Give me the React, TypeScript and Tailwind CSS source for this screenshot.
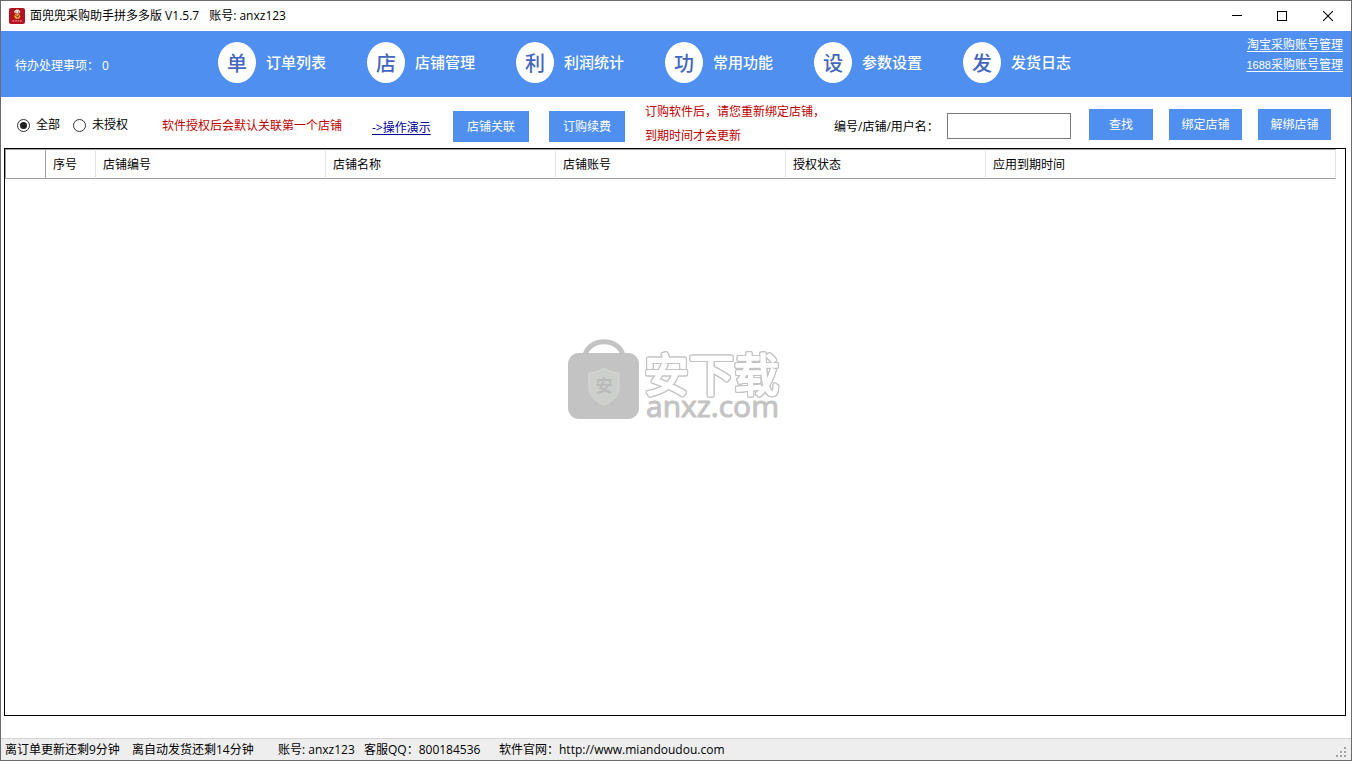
import { useState } from "react";

interface NavItem {
  mark: string;
  label: string;
}

const NAV_ITEMS: NavItem[] = [
  { mark: "单", label: "订单列表" },
  { mark: "店", label: "店铺管理" },
  { mark: "利", label: "利润统计" },
  { mark: "功", label: "常用功能" },
  { mark: "设", label: "参数设置" },
  { mark: "发", label: "发货日志" },
];

const COLUMNS = [
  { label: "序号", width: "w-[50px]" },
  { label: "店铺编号", width: "w-[230px]" },
  { label: "店铺名称", width: "w-[230px]" },
  { label: "店铺账号", width: "w-[230px]" },
  { label: "授权状态", width: "w-[200px]" },
  { label: "应用到期时间", width: "" },
];

const FILTERS = ["全部", "未授权"];

function AppIcon() {
  return (
    <svg width="16" height="16" viewBox="0 0 16 16" aria-hidden="true">
      <rect width="16" height="16" rx="2" fill="#b5121f" />
      <ellipse cx="8.2" cy="3.6" rx="3" ry="2" fill="#f4e6d8" />
      <path d="M5 2.4 6.6 1.4M11.2 2.6 9.8 1.4" stroke="#3a1512" strokeWidth="0.9" />
      <path d="M6.4 4h1M9 4h1" stroke="#3a1512" strokeWidth="0.9" />
      <path d="M6 6.2h4.4l1 2-1.4 2.6H6.6L5.4 8.4z" fill="#e8b23c" />
      <path d="M6.4 7.4l2.8 1.6M10 7l-1.4 2.6" stroke="#8a2a14" strokeWidth="0.9" />
      <path d="M3.4 12.9h2M6.2 12.9h1.6M8.6 12.9h1.6M11 12.9h1.6" stroke="#dc6a70" strokeWidth="1.8" />
    </svg>
  );
}

function TitleBar() {
  return (
    <header className="flex h-[30px] shrink-0 items-center bg-white pl-2">
      <AppIcon />
      <h1 className="ml-[5px] flex gap-[10px] whitespace-nowrap text-xs">
        <span>面兜兜采购助手拼多多版 V1.5.7</span>
        <span>账号: anxz123</span>
      </h1>
      <div className="ml-auto flex h-full">
        <button aria-label="最小化" className="flex w-[45px] items-center justify-center">
          <svg width="10" height="10" viewBox="0 0 10 10" shapeRendering="crispEdges">
            <path d="M0 4.5h10" stroke="#000" />
          </svg>
        </button>
        <button aria-label="最大化" className="flex w-[46px] items-center justify-center">
          <svg width="10" height="10" viewBox="0 0 10 10" shapeRendering="crispEdges">
            <rect x="0.5" y="0.5" width="9" height="9" fill="none" stroke="#000" />
          </svg>
        </button>
        <button aria-label="关闭" className="flex w-[46px] items-center justify-center">
          <svg width="10" height="10" viewBox="0 0 10 10">
            <path d="M0 0l10 10M10 0L0 10" stroke="#000" strokeWidth="1.1" />
          </svg>
        </button>
      </div>
    </header>
  );
}

function NavBar() {
  return (
    <div className="flex h-[66px] shrink-0 bg-[#4f8ff0] text-white">
      <p className="w-[204px] shrink-0 self-center pl-[14px] pt-1 text-xs">待办处理事项： 0</p>
      <nav className="flex items-center gap-[41px] pb-[3px] pl-[13px]">
        {NAV_ITEMS.map((item) => (
          <button key={item.label} className="flex shrink-0 items-center gap-[10px] whitespace-nowrap">
            <span className="flex h-[41px] w-[38px] items-center justify-center rounded-[50%] bg-white pt-[2px] text-xl font-medium text-[#4466bd]">
              {item.mark}
            </span>
            <span className="text-[15px] font-medium">{item.label}</span>
          </button>
        ))}
      </nav>
      <div className="ml-auto flex flex-col items-end whitespace-nowrap pr-2 pt-1 text-xs leading-5 underline underline-offset-2">
        <a href="#taobao">淘宝采购账号管理</a>
        <a href="#1688">
          <span className="font-['Liberation_Sans',sans-serif] text-[11px]">1688</span>采购账号管理
        </a>
      </div>
    </div>
  );
}

function Toolbar() {
  const [filter, setFilter] = useState("全部");

  return (
    <div className="flex shrink-0 items-center whitespace-nowrap pl-4 pr-5 pt-[3px] text-xs">
      <div className="flex w-[145px] shrink-0 gap-[13px] pt-[2px]">
        {FILTERS.map((name) => (
          <label key={name} className="flex items-center gap-[6px]">
            <input
              type="radio"
              name="filter"
              checked={filter === name}
              onChange={() => setFilter(name)}
              className="size-[13px] appearance-none rounded-full border border-[#333] bg-white bg-clip-content p-[2px] checked:bg-[#222]"
            />
            {name}
          </label>
        ))}
      </div>
      <p className="w-[210px] shrink-0 pt-[3px] text-[#c00000]">软件授权后会默认关联第一个店铺</p>
      <a href="#demo" className="w-[81px] shrink-0 pt-2 text-[#00009c] underline underline-offset-2">
        -&gt;操作演示
      </a>
      <div className="flex shrink-0 gap-5 pt-1">
        <button className="h-[31px] w-[76px] bg-[#4f8ff0] pt-px text-white">店铺关联</button>
        <button className="h-[31px] w-[76px] bg-[#4f8ff0] pt-px text-white">订购续费</button>
      </div>
      <p className="ml-5 shrink-0 leading-6 text-[#c00000]">
        订购软件后，请您重新绑定店铺，
        <br />
        到期时间才会更新
      </p>
      <div className="ml-auto flex shrink-0 items-center">
        <label htmlFor="keyword" className="w-[113px] pt-[5px]">
          编号/店铺/用户名：
        </label>
        <input id="keyword" type="text" className="mr-[18px] mt-[3px] h-[26px] w-[124px] border border-[#7a7a7a] bg-white px-1 outline-none" />
        <div className="flex gap-4">
          <button className="h-[31px] w-[64px] bg-[#4f8ff0] pt-px text-white">查找</button>
          <button className="h-[31px] w-[73px] bg-[#4f8ff0] pt-px text-white">绑定店铺</button>
          <button className="h-[31px] w-[73px] bg-[#4f8ff0] pt-px text-white">解绑店铺</button>
        </div>
      </div>
    </div>
  );
}

function ShopGrid() {
  return (
    <main className="mb-[22px] ml-[3px] mr-[5px] flex-1 border border-black bg-white pr-[9px]">
      <table className="w-full table-fixed border-separate border-spacing-0 text-left text-xs">
        <thead>
          <tr className="h-[30px]">
            <th aria-label="选择" className="w-[41px] border border-[#a0a0a0] p-0" />
            {COLUMNS.map((col) => (
              <th
                key={col.label}
                className={`${col.width} border-b border-r border-t border-b-[#a0a0a0] border-r-[#e2e2e2] border-t-[#a0a0a0] p-0 pl-[7px] pt-[2px] font-normal`}
              >
                {col.label}
              </th>
            ))}
          </tr>
        </thead>
        <tbody />
      </table>
    </main>
  );
}

function StatusBar() {
  return (
    <footer className="flex h-[22px] shrink-0 items-center whitespace-nowrap border-t border-[#d4d4d4] bg-[#eeeeee] pl-1 text-xs">
      <span className="w-[127px]">离订单更新还剩9分钟</span>
      <span className="w-[146px]">离自动发货还剩14分钟</span>
      <span className="w-[86px]">账号: anxz123</span>
      <span className="w-[135px]">客服QQ：800184536</span>
      <span>软件官网：http://www.miandoudou.com</span>
      <svg className="ml-auto mr-[3px] self-end" width="12" height="13" viewBox="0 0 12 13" fill="#a3a3a3" aria-hidden="true">
        <path d="M8 0h2v2H8zM4 4h2v2H4zM8 4h2v2H8zM0 8h2v2H0zM4 8h2v2H4zM8 8h2v2H8z" />
      </svg>
    </footer>
  );
}

function Watermark() {
  return (
    <div className="pointer-events-none absolute inset-0 flex items-center justify-center">
      <svg width="216" height="94" viewBox="0 -5 216 94" role="img" aria-label="安下载 anxz.com">
        <path d="M17 17C20 -2 52 -2 55 17" fill="none" stroke="#c3c3c3" strokeWidth="5" />
        <rect x="0" y="14" width="71" height="66" rx="11" fill="#c3c3c3" />
        <path d="M36 29c5 3 9 5 15 5v15c0 8-7 13-15 17-8-4-15-9-15-17V34c6 0 10-2 15-5z" fill="#cdcfcd" stroke="#d8d9d6" strokeWidth="1" />
        <text x="36" y="53" textAnchor="middle" fontSize="17" fontWeight="700" fill="#b9bab9">
          安
        </text>
        <text
          x="76"
          y="53"
          fontSize="45"
          fontWeight="400"
          fill="#fff"
          stroke="#fff"
          strokeWidth="2"
          strokeLinejoin="round"
          className="[filter:drop-shadow(1px_0_0_#c3c3c3)_drop-shadow(-1px_0_0_#c3c3c3)_drop-shadow(0_1px_0_#c3c3c3)_drop-shadow(0_-1px_0_#c3c3c3)]"
        >
          安下载
        </text>
        <text x="78" y="78" fontSize="30" fill="#c3c3c3" stroke="#c3c3c3" strokeWidth="1">
          anxz.com
        </text>
      </svg>
    </div>
  );
}

export default function App() {
  return (
    <div className="relative flex min-h-screen flex-col border border-[#6b6b6b] bg-white font-['Open_Sans','Noto_Sans_CJK_SC',sans-serif] text-black">
      <TitleBar />
      <NavBar />
      <Toolbar />
      <ShopGrid />
      <StatusBar />
      <Watermark />
    </div>
  );
}
